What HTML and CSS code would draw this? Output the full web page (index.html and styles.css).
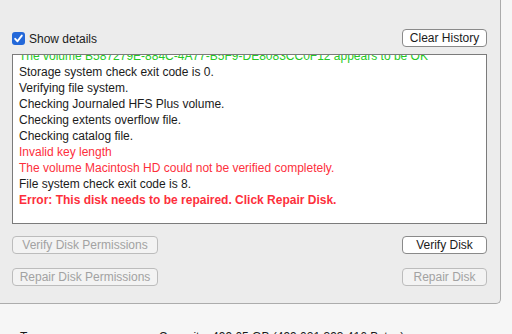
FILE: index.html
```html
<!DOCTYPE html>
<html>
<head>
<meta charset="utf-8">
<link rel="stylesheet" href="styles.css">
</head>
<body>
<div class="panel">
  <div class="toprow">
    <label class="check">
      <svg class="box" width="13" height="13" viewBox="0 0 13 13">
        <rect x="0" y="0" width="13" height="13" rx="3" fill="#2368d9"/>
        <path d="M3.2 6.8 L5.5 9.3 L9.8 3.6" fill="none" stroke="#fff" stroke-width="1.9" stroke-linecap="round" stroke-linejoin="round"/>
      </svg>
      <span>Show details</span>
    </label>
    <button class="btn wide">Clear History</button>
  </div>
  <div class="log">
    <div class="lines">
      <div class="ok">The volume B587279E-884C-4A77-B5F9-DE8083CC0F12 appears to be OK</div>
      <div>Storage system check exit code is 0.</div>
      <div>Verifying file system.</div>
      <div>Checking Journaled HFS Plus volume.</div>
      <div>Checking extents overflow file.</div>
      <div>Checking catalog file.</div>
      <div class="err">Invalid key length</div>
      <div class="err">The volume Macintosh HD could not be verified completely.</div>
      <div>File system check exit code is 8.</div>
      <div class="err bold">Error: This disk needs to be repaired. Click Repair Disk.</div>
    </div>
  </div>
  <div class="btnrow first">
    <button class="btn perm off">Verify Disk Permissions</button>
    <button class="btn wide">Verify Disk</button>
  </div>
  <div class="btnrow">
    <button class="btn perm off">Repair Disk Permissions</button>
    <button class="btn wide off">Repair Disk</button>
  </div>
</div>
<div class="info">
  <span class="lbl">Type :</span>
  <span class="cap">Capacity: 499.05 GB (499,021,393,416 Bytes)</span>
</div>
</body>
</html>
```
FILE: styles.css
```css
html, body {
  margin: 0;
  padding: 0;
}
body {
  width: 512px;
  height: 334px;
  overflow: hidden;
  background: #f6f6f6;
  font-family: "Liberation Sans", Arial, sans-serif;
  font-size: 12px;
  color: #1b1b1b;
}
.panel {
  box-sizing: border-box;
  width: 501px;
  height: 304px;
  background: #ececec;
  border-right: 1px solid #acacac;
  border-bottom: 1px solid #acacac;
  border-bottom-right-radius: 5px;
  padding: 29px 0 0 12px;
}
.toprow {
  display: flex;
  justify-content: space-between;
  align-items: center;
  width: 475px;
  height: 18px;
}
.check {
  display: flex;
  align-items: center;
  gap: 4px;
  margin-top: 1px;
}
.box {
  display: block;
}
.btn {
  box-sizing: border-box;
  height: 18px;
  padding: 0;
  border: 1px solid #8a8a8a;
  border-radius: 4px;
  background: #ffffff;
  font-family: "Liberation Sans", Arial, sans-serif;
  font-size: 12px;
  line-height: 16px;
  color: #1b1b1b;
  text-align: center;
}
.wide {
  width: 85px;
}
.perm {
  width: 146px;
}
.off {
  border-color: #bcbcbc;
  background: #f3f3f3;
  color: #a2a2a2;
}
.log {
  box-sizing: border-box;
  width: 475px;
  height: 170px;
  margin-top: 7px;
  border: 1px solid #7b7b7b;
  background: #ffffff;
  overflow: hidden;
}
.lines {
  margin-top: -7px;
  padding-left: 6px;
  line-height: 16px;
  white-space: nowrap;
}
.ok {
  color: #25c825;
}
.err {
  color: #fd2f3c;
}
.bold {
  font-weight: bold;
}
.btnrow {
  display: flex;
  justify-content: space-between;
  width: 475px;
  margin-top: 14px;
}
.btnrow.first {
  margin-top: 12px;
}
.info {
  display: flex;
  padding: 26px 0 0 20px;
  line-height: 14px;
  white-space: nowrap;
}
.cap {
  margin-left: 106px;
}
```
